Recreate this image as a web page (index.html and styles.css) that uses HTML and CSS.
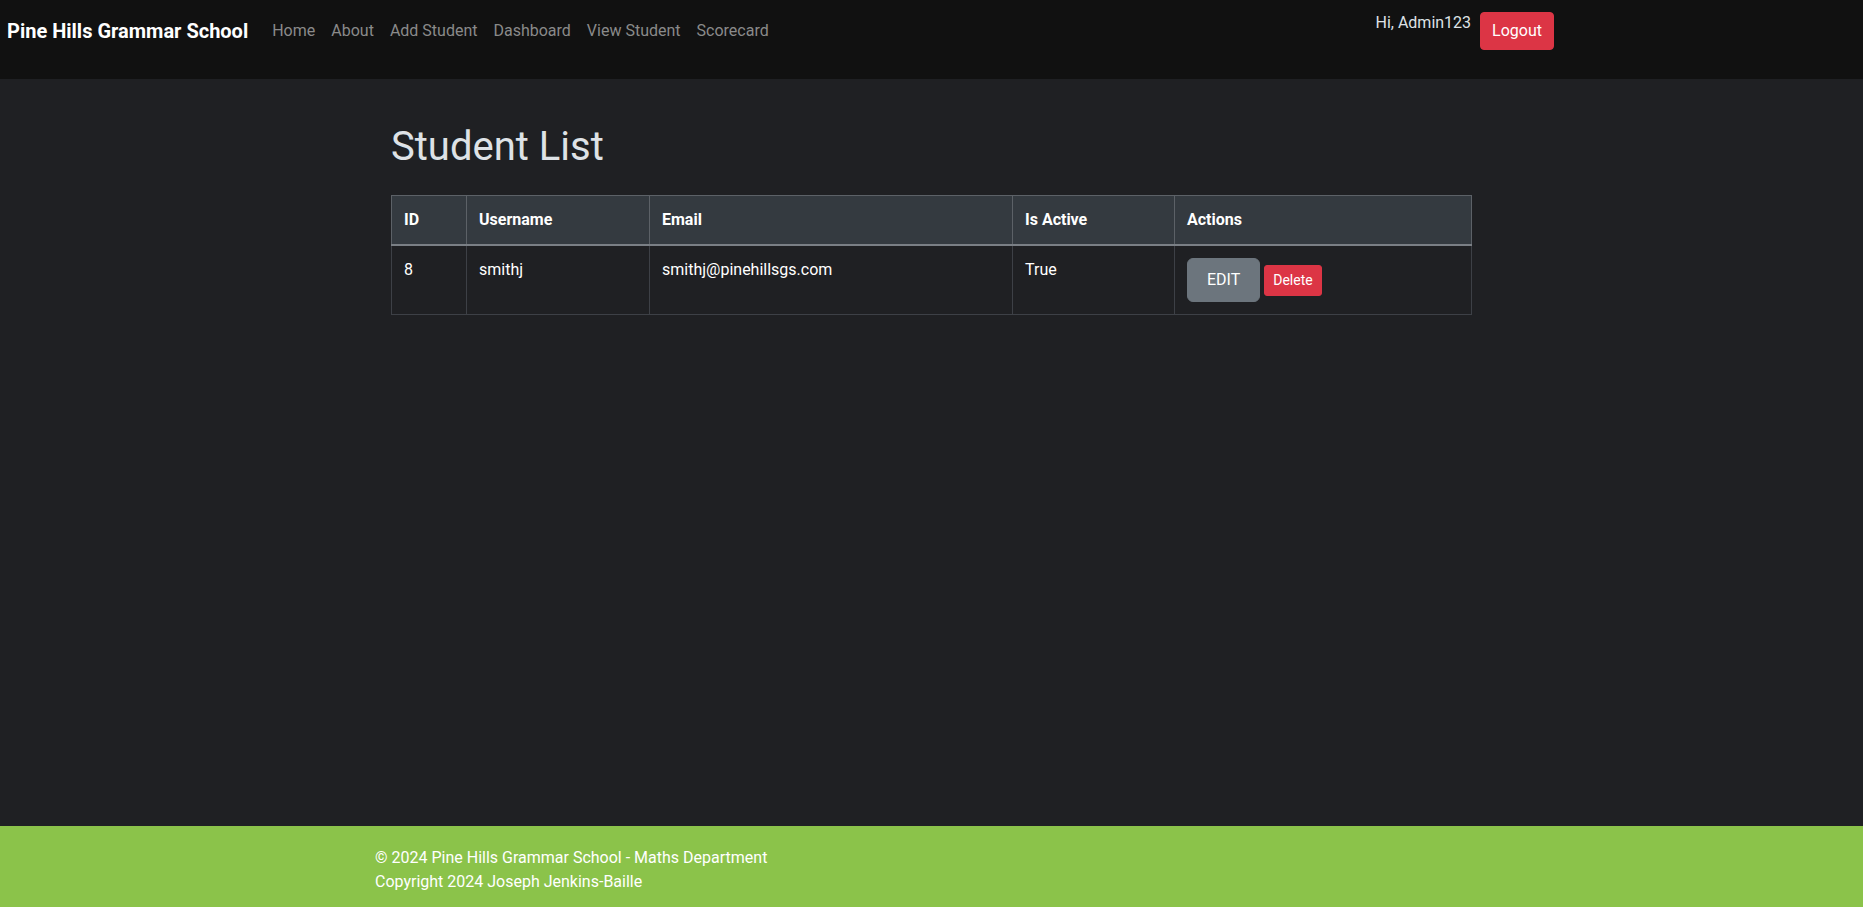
FILE: index.html
```html
<!DOCTYPE html>
<html lang="en">
<head>
<meta charset="utf-8">
<title>Student List - Pine Hills Grammar School</title>
<link rel="stylesheet" href="styles.css">
</head>
<body>
<nav class="navbar">
  <a class="brand" href="#">Pine Hills Grammar School</a>
  <ul class="nav-links">
    <li><a class="nav-link" href="#">Home</a></li>
    <li><a class="nav-link" href="#">About</a></li>
    <li><a class="nav-link" href="#">Add Student</a></li>
    <li><a class="nav-link" href="#">Dashboard</a></li>
    <li><a class="nav-link" href="#">View Student</a></li>
    <li><a class="nav-link" href="#">Scorecard</a></li>
  </ul>
  <div class="user-area">
    <span class="greeting">Hi, Admin123</span>
    <button class="btn btn-logout" type="button">Logout</button>
  </div>
</nav>
<main class="main">
  <div class="content">
    <h1 class="title">Student List</h1>
    <table class="table">
      <thead>
        <tr>
          <th class="col-id">ID</th>
          <th class="col-user">Username</th>
          <th class="col-email">Email</th>
          <th class="col-active">Is Active</th>
          <th class="col-actions">Actions</th>
        </tr>
      </thead>
      <tbody>
        <tr>
          <td>8</td>
          <td>smithj</td>
          <td>smithj@pinehillsgs.com</td>
          <td>True</td>
          <td><button class="btn btn-edit" type="button">EDIT</button> <button class="btn btn-delete" type="button">Delete</button></td>
        </tr>
      </tbody>
    </table>
  </div>
</main>
<footer class="footer">
  <div class="footer-inner">
    <div>© 2024 Pine Hills Grammar School - Maths Department</div>
    <div>Copyright 2024 Joseph Jenkins-Baille</div>
  </div>
</footer>
</body>
</html>
```

FILE: styles.css
```css
* { box-sizing: border-box; }

html, body {
  margin: 0;
  padding: 0;
}

body {
  font-family: Roboto, "Liberation Sans", Arial, sans-serif;
  font-size: 16px;
  line-height: 24px;
  background: #1f2023;
  color: #dee2e6;
  min-height: 100vh;
  display: flex;
  flex-direction: column;
}

.navbar {
  height: 79px;
  background: #111111;
  display: flex;
  align-items: flex-start;
  padding: 11px 0 0 7px;
}

.brand {
  font-size: 20px;
  line-height: 30px;
  padding-top: 5px;
  font-weight: 700;
  color: #ffffff;
  text-decoration: none;
  margin-right: 16px;
}

.nav-links {
  list-style: none;
  margin: 0;
  padding: 0;
  display: flex;
}

.nav-link {
  display: block;
  padding: 8px 8px;
  color: #8a8a8a;
  text-decoration: none;
}

.user-area {
  margin-left: auto;
  margin-right: 309px;
  display: flex;
  align-items: flex-start;
  gap: 9px;
}

.greeting {
  color: #dee2e6;
  margin-top: 0;
}

.btn {
  font-family: inherit;
  border: 1px solid transparent;
  cursor: pointer;
  display: inline-block;
  vertical-align: baseline;
}

.btn-logout {
  margin-top: 1px;
  background: #dc3545;
  border-color: #dc3545;
  color: #ffffff;
  font-size: 16px;
  line-height: 24px;
  padding: 6px 11px;
  border-radius: 4px;
}

.main {
  flex: 1;
  padding-top: 44px;
}

.content {
  width: 1081px;
  margin: 0 auto;
}

.title {
  margin: 0 0 24px;
  font-size: 40px;
  line-height: 48px;
  font-weight: 400;
  color: #dee2e6;
}

.table {
  width: 1080px;
  table-layout: fixed;
  border-collapse: collapse;
  color: #ffffff;
}

.table th,
.table td {
  text-align: left;
  vertical-align: top;
  padding: 12px;
}

.table th {
  background: #343a40;
  font-weight: 700;
  border: 1px solid #5c6167;
  border-bottom: 2px solid #7a7f85;
}

.table td {
  border: 1px solid #3d4046;
  border-top: none;
}

.col-id { width: 75px; }
.col-user { width: 183px; }
.col-email { width: 363px; }
.col-active { width: 162px; }
.col-actions { width: 297px; }

.btn-edit {
  background: #6c757d;
  border-color: #6c757d;
  color: #ffffff;
  font-size: 16px;
  line-height: 24px;
  padding: 9px 19px;
  border-radius: 6px;
}

.btn-delete {
  background: #dc3545;
  border-color: #dc3545;
  color: #ffffff;
  font-size: 14px;
  line-height: 21px;
  padding: 4px 8px;
  border-radius: 3px;
}

.footer {
  background: #8bc34a;
  color: #ffffff;
  padding: 20px 0 13px;
}

.footer-inner {
  width: 1113px;
  margin: 0 auto;
}
```
